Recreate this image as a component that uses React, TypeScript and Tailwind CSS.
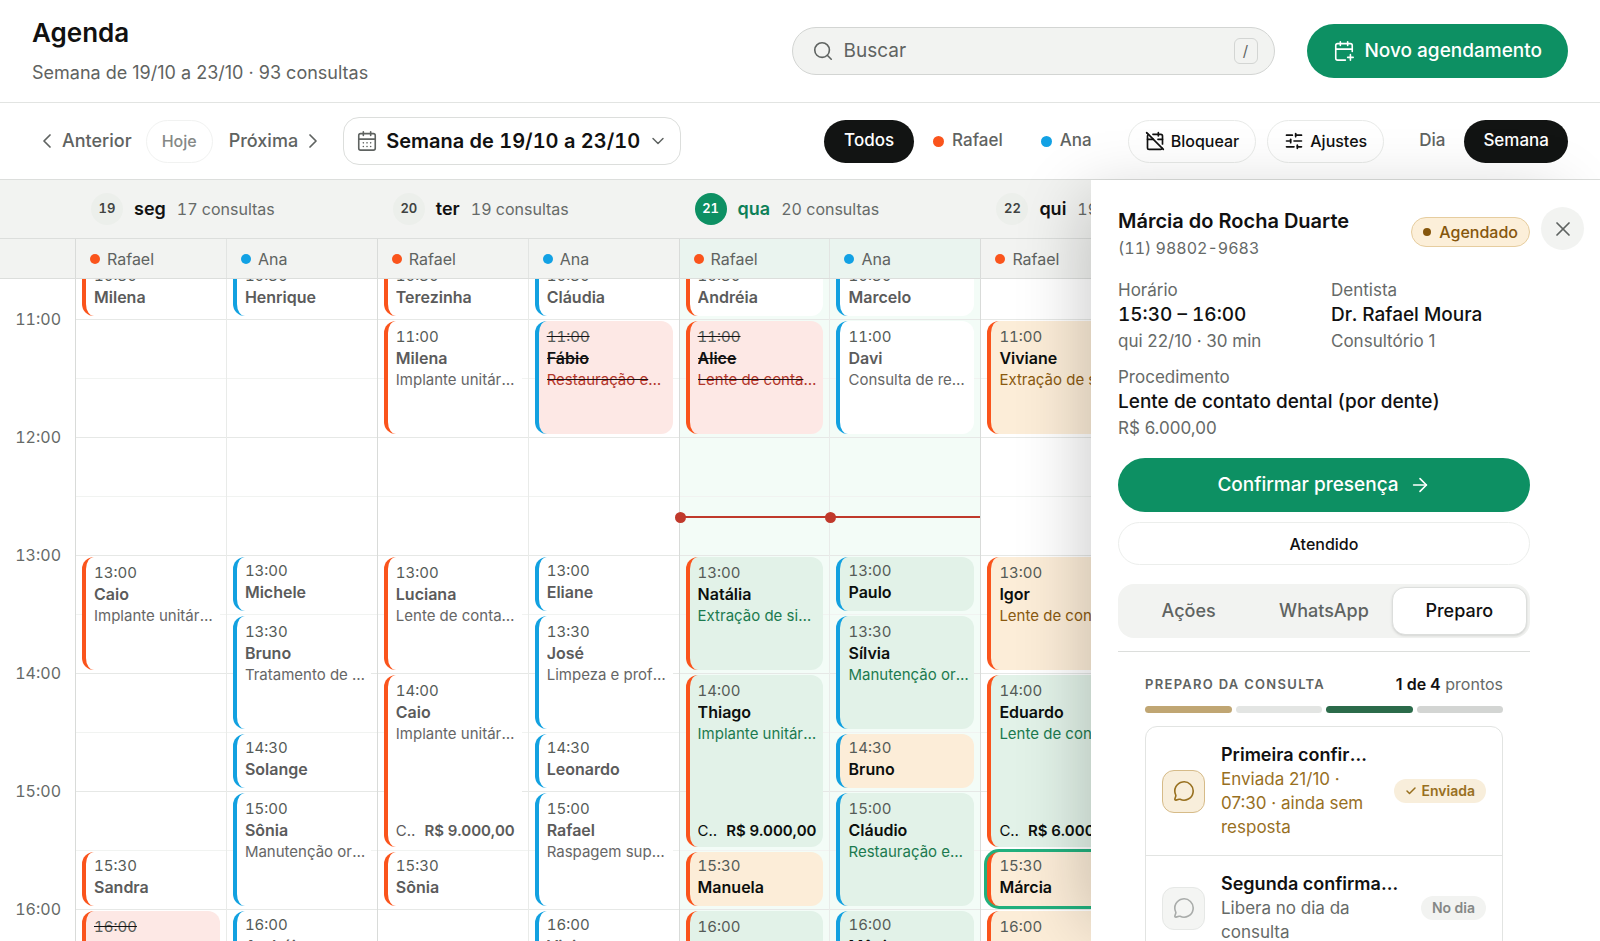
import { useState } from 'react';
import {
  ArrowRight,
  CalendarDays,
  CalendarOff,
  CalendarPlus,
  Check,
  ChevronDown,
  ChevronLeft,
  ChevronRight,
  MessageCircle,
  Search,
  SlidersHorizontal,
  X,
} from 'lucide-react';

type Status = 'done' | 'missed' | 'confirmed' | 'scheduled';

interface Appointment {
  time: string;
  slots: number;
  name: string;
  procedure?: string;
  price?: string;
  status?: Status;
  selected?: boolean;
}

interface Day {
  date: number;
  label: string;
  count: number;
  today?: boolean;
  rafael: Appointment[];
  ana: Appointment[];
}

const HOURS = ['11:00', '12:00', '13:00', '14:00', '15:00', '16:00'];
const SLOTS = 12;
const SLOT_HEIGHT = 59;
const START_MINUTES = 10 * 60 + 30;
const NOW_MINUTES = 12 * 60 + 40;

const DAYS: Day[] = [
  {
    date: 19,
    label: 'seg',
    count: 17,
    rafael: [
      { time: '10:30', slots: 1, name: 'Milena' },
      { time: '13:00', slots: 2, name: 'Caio', procedure: 'Implante unitário com coroa' },
      { time: '15:30', slots: 1, name: 'Sandra' },
      { time: '16:00', slots: 2, name: 'Helena', procedure: 'Restauração em resina', status: 'missed' },
    ],
    ana: [
      { time: '10:30', slots: 1, name: 'Henrique' },
      { time: '13:00', slots: 1, name: 'Michele' },
      { time: '13:30', slots: 2, name: 'Bruno', procedure: 'Tratamento de canal' },
      { time: '14:30', slots: 1, name: 'Solange' },
      { time: '15:00', slots: 2, name: 'Sônia', procedure: 'Manutenção ortodôntica' },
      { time: '16:00', slots: 1, name: 'Andréia' },
    ],
  },
  {
    date: 20,
    label: 'ter',
    count: 19,
    rafael: [
      { time: '10:30', slots: 1, name: 'Terezinha' },
      { time: '11:00', slots: 2, name: 'Milena', procedure: 'Implante unitário com coroa' },
      { time: '13:00', slots: 2, name: 'Luciana', procedure: 'Lente de contato dental' },
      { time: '14:00', slots: 3, name: 'Caio', procedure: 'Implante unitário com coroa', price: 'R$ 9.000,00' },
      { time: '15:30', slots: 1, name: 'Sônia' },
    ],
    ana: [
      { time: '10:30', slots: 1, name: 'Cláudia' },
      { time: '11:00', slots: 2, name: 'Fábio', procedure: 'Restauração em resina', status: 'missed' },
      { time: '13:00', slots: 1, name: 'Eliane' },
      { time: '13:30', slots: 2, name: 'José', procedure: 'Limpeza e profilaxia' },
      { time: '14:30', slots: 1, name: 'Leonardo' },
      { time: '15:00', slots: 2, name: 'Rafael', procedure: 'Raspagem supragengival' },
      { time: '16:00', slots: 1, name: 'Vivian' },
    ],
  },
  {
    date: 21,
    label: 'qua',
    count: 20,
    today: true,
    rafael: [
      { time: '10:30', slots: 1, name: 'Andréia' },
      { time: '11:00', slots: 2, name: 'Alice', procedure: 'Lente de contato dental', status: 'missed' },
      { time: '13:00', slots: 2, name: 'Natália', procedure: 'Extração de siso incluso', status: 'confirmed' },
      { time: '14:00', slots: 3, name: 'Thiago', procedure: 'Implante unitário com coroa', price: 'R$ 9.000,00', status: 'confirmed' },
      { time: '15:30', slots: 1, name: 'Manuela', status: 'scheduled' },
      { time: '16:00', slots: 2, name: 'Otávio', procedure: 'Extração de siso incluso', status: 'confirmed' },
    ],
    ana: [
      { time: '10:30', slots: 1, name: 'Marcelo' },
      { time: '11:00', slots: 2, name: 'Davi', procedure: 'Consulta de retorno' },
      { time: '13:00', slots: 1, name: 'Paulo', status: 'confirmed' },
      { time: '13:30', slots: 2, name: 'Sílvia', procedure: 'Manutenção ortodôntica', status: 'confirmed' },
      { time: '14:30', slots: 1, name: 'Bruno', status: 'scheduled' },
      { time: '15:00', slots: 2, name: 'Cláudio', procedure: 'Restauração em resina', status: 'confirmed' },
      { time: '16:00', slots: 1, name: 'Mônica', status: 'confirmed' },
    ],
  },
  {
    date: 22,
    label: 'qui',
    count: 19,
    rafael: [
      { time: '11:00', slots: 2, name: 'Viviane', procedure: 'Extração de siso incluso', status: 'scheduled' },
      { time: '13:00', slots: 2, name: 'Igor', procedure: 'Lente de contato dental', status: 'scheduled' },
      { time: '14:00', slots: 3, name: 'Eduardo', procedure: 'Lente de contato dental', price: 'R$ 6.000,00', status: 'confirmed' },
      { time: '15:30', slots: 1, name: 'Márcia', status: 'scheduled', selected: true },
      { time: '16:00', slots: 2, name: 'Renato', procedure: 'Implante unitário com coroa', status: 'scheduled' },
    ],
    ana: [],
  },
  { date: 23, label: 'sex', count: 18, rafael: [], ana: [] },
];

const CARD_STYLES: Record<Status, string> = {
  done: 'bg-white text-[#5b5b5b]',
  missed: 'bg-[#fde8e5] text-[#111] line-through',
  confirmed: 'bg-[#e2f2e8] text-[#0c0f0d]',
  scheduled: 'bg-[#fcedd8] text-[#0c0f0d]',
};

const PROCEDURE_STYLES: Record<Status, string> = {
  done: 'text-[#666]',
  missed: 'text-[#b3362a]',
  confirmed: 'text-[#1c7a4f]',
  scheduled: 'text-[#8a5a10]',
};

function toMinutes(time: string) {
  const [h, m] = time.split(':').map(Number);
  return h * 60 + m;
}

function AppointmentCard({ item, color }: { item: Appointment; color: string }) {
  const status = item.status || 'done';
  const row = (toMinutes(item.time) - START_MINUTES) / 30 + 1;

  return (
    <button
      style={{ gridRow: `${row} / span ${item.slots}` }}
      className={`col-start-1 z-10 mx-[6px] mt-[2px] mb-[3px] flex min-w-0 flex-col rounded-xl border-l-4 pr-[5px] pl-2 text-left text-[15px] leading-[22px] ${color} ${CARD_STYLES[status]} ${
        item.slots === 1 ? 'pt-[3px]' : 'py-[5px]'
      } ${item.selected ? 'ring-3 ring-[#22b07d]' : ''}`}
    >
      <span className="leading-[21px] tabular-nums text-[#555b57]">{item.time}</span>
      <span className="w-full truncate text-base leading-[22px] font-semibold">{item.name}</span>
      {item.procedure && (
        <span className={`w-full truncate ${PROCEDURE_STYLES[status]}`}>{item.procedure}</span>
      )}
      {item.price && (
        <span className="mt-auto flex w-full gap-2 pr-0.5">
          <span className="min-w-0 flex-1 truncate">Consultório 1</span>
          <span className="font-semibold">{item.price}</span>
        </span>
      )}
    </button>
  );
}

function DoctorColumn({ items, color, today, first }: { items: Appointment[]; color: string; today?: boolean; first?: boolean }) {
  return (
    <div
      className={`relative grid grid-cols-[minmax(0,1fr)] auto-rows-[59px] border-l ${
        first ? 'border-[#d9dbd9]' : 'border-[#e9ebe9]'
      } ${today ? 'bg-[#f3fcf7]' : 'bg-white'}`}
    >
      {Array.from({ length: SLOTS }, (_, i) => (
        <div
          key={i}
          style={{ gridRow: i + 1 }}
          className={`col-start-1 border-t ${i % 2 ? 'border-[#e6e8e6]' : 'border-[#f1f3f1]'}`}
        />
      ))}
      {items.map(item => (
        <AppointmentCard key={item.time} item={item} color={color} />
      ))}
      {today && (
        <div
          style={{ top: ((NOW_MINUTES - START_MINUTES) / 30) * SLOT_HEIGHT }}
          className="absolute inset-x-0 z-20 h-[2px] bg-[#c0392b]"
        >
          <div className="absolute -top-1 -left-[5px] size-[11px] rounded-full bg-[#c0392b]" />
        </div>
      )}
    </div>
  );
}

function Header() {
  return (
    <header className="flex h-[103px] shrink-0 items-center justify-between border-b border-[#e2e4e2] px-8">
      <div>
        <h1 className="text-[26px] leading-8 font-semibold text-[#111]">Agenda</h1>
        <p className="mt-3 text-lg leading-6 text-[#5f6361]">Semana de 19/10 a 23/10 · 93 consultas</p>
      </div>
      <div className="flex items-center gap-8">
        <label className="flex h-12 w-[483px] items-center gap-2.5 rounded-full border border-[#d3d5d3] bg-[#f2f3f1] pr-4 pl-[19px]">
          <Search className="size-[22px] text-[#5f6361]" strokeWidth={1.75} />
          <input
            aria-label="Buscar"
            placeholder="Buscar"
            className="min-w-0 flex-1 bg-transparent text-[19px] outline-none placeholder:text-[#5f6361]"
          />
          <kbd className="flex h-[26px] w-6 items-center justify-center rounded-md border border-[#d3d5d3] bg-[#f2f3f1] font-[Inter] text-[15px] text-[#5f6361]">
            /
          </kbd>
        </label>
        <button className="flex h-[54px] items-center gap-2.5 rounded-full bg-[#0d9063] px-[26px] text-[19px] font-medium text-white">
          <CalendarPlus className="size-[22px]" strokeWidth={1.75} />
          Novo agendamento
        </button>
      </div>
    </header>
  );
}

function Toolbar() {
  const [view, setView] = useState('Semana');

  return (
    <div className="flex h-[77px] shrink-0 items-center justify-between border-b border-[#dcdedc] px-8 text-[17px] font-medium text-[#5f6361]">
      <div className="flex items-center text-lg">
        <button className="flex items-center gap-[3px] pl-[3px]">
          <ChevronLeft className="size-6" strokeWidth={1.75} />
          Anterior
        </button>
        <button className="ml-3.5 h-[43px] rounded-full border border-[#f1f2f1] px-[15px] text-base text-[#858886]">Hoje</button>
        <button className="ml-4 flex items-center gap-[3px] pr-[3px]">
          Próxima
          <ChevronRight className="size-6" strokeWidth={1.75} />
        </button>
        <button className="ml-[15px] flex h-12 items-center gap-2 rounded-2xl border border-[#dcdedc] px-3 text-xl font-semibold tabular-nums text-[#111]">
          <CalendarDays className="size-[22px] text-[#5f6361]" strokeWidth={1.75} />
          Semana de 19/10 a 23/10
          <ChevronDown className="size-5 text-[#5f6361]" strokeWidth={1.75} />
        </button>
      </div>
      <div className="flex items-center">
        <button className="h-[43px] rounded-full bg-[#121413] px-5 text-white">Todos</button>
        <button className="ml-[19px] flex items-center gap-2">
          <span className="size-[11px] rounded-full bg-[#fa541c]" />
          Rafael
        </button>
        <button className="ml-[38px] flex items-center gap-2">
          <span className="size-[11px] rounded-full bg-[#12a1e4]" />
          Ana
        </button>
        <button className="ml-9 flex h-[43px] items-center gap-1.5 rounded-full border border-[#e8eae8] px-4 text-base text-[#111]">
          <CalendarOff className="size-5" />
          Bloquear
        </button>
        <button className="ml-[11px] flex h-[43px] items-center gap-1.5 rounded-full border border-[#e8eae8] px-4 text-base text-[#111]">
          <SlidersHorizontal className="size-5" />
          Ajustes
        </button>
        <div className="ml-4 flex items-center">
          {['Dia', 'Semana'].map(name => (
            <button
              key={name}
              onClick={() => setView(name)}
              className={`h-[43px] rounded-full px-[19px] ${view === name ? 'bg-[#121413] text-white' : ''}`}
            >
              {name}
            </button>
          ))}
        </div>
      </div>
    </div>
  );
}

function Calendar() {
  return (
    <div className="flex min-h-0 flex-1 flex-col">
      {/* Day names */}
      <div className="flex h-[59px] shrink-0 border-b border-[#dcdedc] bg-[#f2f3f1] pr-4 pl-[75px]">
        {DAYS.map(day => (
          <div key={day.date} className="flex min-w-0 flex-1 items-center gap-[11px] pl-4 whitespace-nowrap">
            <span
              className={`flex size-8 items-center justify-center rounded-full text-[13px] font-semibold tabular-nums ${
                day.today ? 'bg-[#0d9063] text-white' : 'bg-[#ecefeb] text-[#3f4341]'
              }`}
            >
              {day.date}
            </span>
            <span className={`text-lg font-semibold ${day.today ? 'text-[#0d8058]' : 'text-[#111]'}`}>{day.label}</span>
            <span className="text-base tabular-nums text-[#666a68]">{day.count} consultas</span>
          </div>
        ))}
      </div>

      {/* Doctors of each day */}
      <div className="flex h-10 shrink-0 border-b border-[#dcdedc] bg-[#f2f3f1] pr-4 pl-[75px]">
        {DAYS.map(day => (
          <div
            key={day.date}
            className={`grid flex-1 grid-cols-2 text-base text-[#5f6361] ${day.today ? 'bg-[#eaf4ef]' : ''}`}
          >
            <div className="flex items-center gap-[7px] border-l border-[#d9dbd9] pl-3.5">
              <span className="size-2.5 rounded-full bg-[#fa541c]" />
              Rafael
            </div>
            <div className="flex items-center gap-[7px] border-l border-[#e2e4e2] pl-3.5">
              <span className="size-2.5 rounded-full bg-[#12a1e4]" />
              Ana
            </div>
          </div>
        ))}
      </div>

      <div className="min-h-0 flex-1 overflow-hidden">
        <div className="-mt-[19px] flex pr-4">
          <div className="w-[75px] shrink-0">
            {HOURS.map(hour => (
              <div key={hour} className="flex h-[118px] items-center justify-end pr-3.5 text-base tabular-nums text-[#666a68]">
                {hour}
              </div>
            ))}
          </div>
          {DAYS.map(day => (
            <div key={day.date} className="grid min-w-0 flex-1 grid-cols-2">
              <DoctorColumn items={day.rafael} color="border-[#fa541c]" today={day.today} first />
              <DoctorColumn items={day.ana} color="border-[#12a1e0]" today={day.today} />
            </div>
          ))}
        </div>
      </div>
    </div>
  );
}

function Detail({ label, value, note }: { label: string; value: string; note: string }) {
  return (
    <div className="text-[17px] leading-[26px] text-[#666a68]">
      <p className="leading-6">{label}</p>
      <p className="text-[19px] leading-[26px] font-medium tabular-nums text-[#111]">{value}</p>
      <p>{note}</p>
    </div>
  );
}

function DetailsPanel() {
  const [tab, setTab] = useState('Preparo');

  return (
    <aside className="absolute inset-y-0 right-0 z-30 w-[509px] bg-white pl-[27px] shadow-[-24px_0_64px_-16px_rgba(0,0,0,0.2)]">
      <div className="flex items-start pt-[27px]">
        <div className="flex-1">
          <h2 className="text-xl leading-7 font-semibold text-[#111]">Márcia do Rocha Duarte</h2>
          <p className="text-base leading-[26px] tabular-nums text-[#666a68]">(11) 98802-9683</p>
        </div>
        <span className="mt-2.5 flex h-[30px] items-center gap-2 rounded-full border border-[#e6cd9f] bg-[#fcefd9] px-[11px] text-base font-medium text-[#85560c]">
          <span className="size-2 rounded-full bg-[#85560c]" />
          Agendado
        </span>
        <button
          aria-label="Fechar"
          className="mr-4 ml-[11px] flex size-[43px] items-center justify-center rounded-full bg-[#f2f3f1] text-[#5f6361]"
        >
          <X className="size-6" strokeWidth={1.75} />
        </button>
      </div>

      <div className="mr-[70px]">
        <div className="mt-[17px] grid grid-cols-2 gap-x-3.5 gap-y-[11px]">
          <Detail label="Horário" value="15:30 – 16:00" note="qui 22/10 · 30 min" />
          <Detail label="Dentista" value="Dr. Rafael Moura" note="Consultório 1" />
          <div className="col-span-2">
            <Detail label="Procedimento" value="Lente de contato dental (por dente)" note="R$ 6.000,00" />
          </div>
        </div>

        <button className="mt-[17px] flex h-[54px] w-full items-center justify-center gap-2.5 rounded-full bg-[#0d9063] text-[19px] font-medium text-white">
          Confirmar presença
          <ArrowRight className="size-[22px]" strokeWidth={1.75} />
        </button>
        <button className="mt-2.5 h-[43px] w-full rounded-full border border-[#eceeec] text-base font-medium text-[#111]">
          Atendido
        </button>

        <div className="mt-[19px] grid h-[54px] grid-cols-3 rounded-2xl bg-[#f2f3f1] p-[3px]">
          {['Ações', 'WhatsApp', 'Preparo'].map(name => (
            <button
              key={name}
              onClick={() => setTab(name)}
              className={`rounded-[13px] border text-lg font-medium ${
                tab === name ? 'border-[#dcdedc] bg-white text-[#111] shadow-sm' : 'border-transparent text-[#5f6361]'
              }`}
            >
              {name}
            </button>
          ))}
        </div>

        <div className="mt-[13px] border-t border-[#dcdedc] px-[27px] pt-5">
          <div className="flex items-center justify-between leading-6">
            <h3 className="text-[13px] font-semibold tracking-widest text-[#5f6361]">PREPARO DA CONSULTA</h3>
            <p className="text-base leading-6 text-[#666a68]">
              <b className="font-semibold text-[#111]">1 de 4</b> prontos
            </p>
          </div>
          <div className="mt-2.5 grid grid-cols-4 gap-1">
            <span className="h-[7px] rounded-full bg-[#c0a673]" />
            <span className="h-[7px] rounded-full bg-[#e3e5e3]" />
            <span className="h-[7px] rounded-full bg-[#2b6b4a]" />
            <span className="h-[7px] rounded-full bg-[#d3d5d3]" />
          </div>

          <ul className="mt-[13px] divide-y divide-[#e2e4e2] rounded-xl border border-[#e2e4e2]">
            <li className="flex items-center gap-4 p-4">
              <span className="flex size-[43px] shrink-0 items-center justify-center rounded-xl border border-[#d6bb88] bg-[#f8eedb] text-[#98701f]">
                <MessageCircle className="size-[22px]" strokeWidth={1.75} />
              </span>
              <div className="min-w-0 flex-1 text-[17px] leading-6 text-[#98701f]">
                <p className="truncate text-lg leading-6 font-semibold text-[#111]">Primeira confirmação</p>
                <p>Enviada 21/10 · 07:30 · ainda sem resposta</p>
              </div>
              <span className="ml-1 flex h-6 items-center gap-1 rounded-full bg-[#f8eedb] px-[11px] text-sm font-semibold text-[#98701f]">
                <Check className="size-3" strokeWidth={3} />
                Enviada
              </span>
            </li>
            <li className="flex items-center gap-4 p-4">
              <span className="flex size-[43px] shrink-0 items-center justify-center rounded-xl border border-[#e6e8e6] bg-[#f4f5f3] text-[#a9acaa]">
                <MessageCircle className="size-[22px]" strokeWidth={1.75} />
              </span>
              <div className="min-w-0 flex-1 text-[17px] leading-6 text-[#666a68]">
                <p className="truncate text-lg leading-6 font-semibold text-[#111]">Segunda confirmação</p>
                <p>Libera no dia da consulta</p>
              </div>
              <span className="flex h-6 items-center rounded-full bg-[#f2f3f1] px-[11px] text-sm font-semibold text-[#858886]">
                No dia
              </span>
            </li>
          </ul>
        </div>
      </div>
    </aside>
  );
}

export default function App() {
  return (
    <div className="flex h-screen flex-col overflow-hidden bg-white font-[Inter,sans-serif] text-[#111]">
      <Header />
      <Toolbar />
      <main className="relative flex min-h-0 flex-1 flex-col">
        <Calendar />
        <DetailsPanel />
      </main>
    </div>
  );
}
